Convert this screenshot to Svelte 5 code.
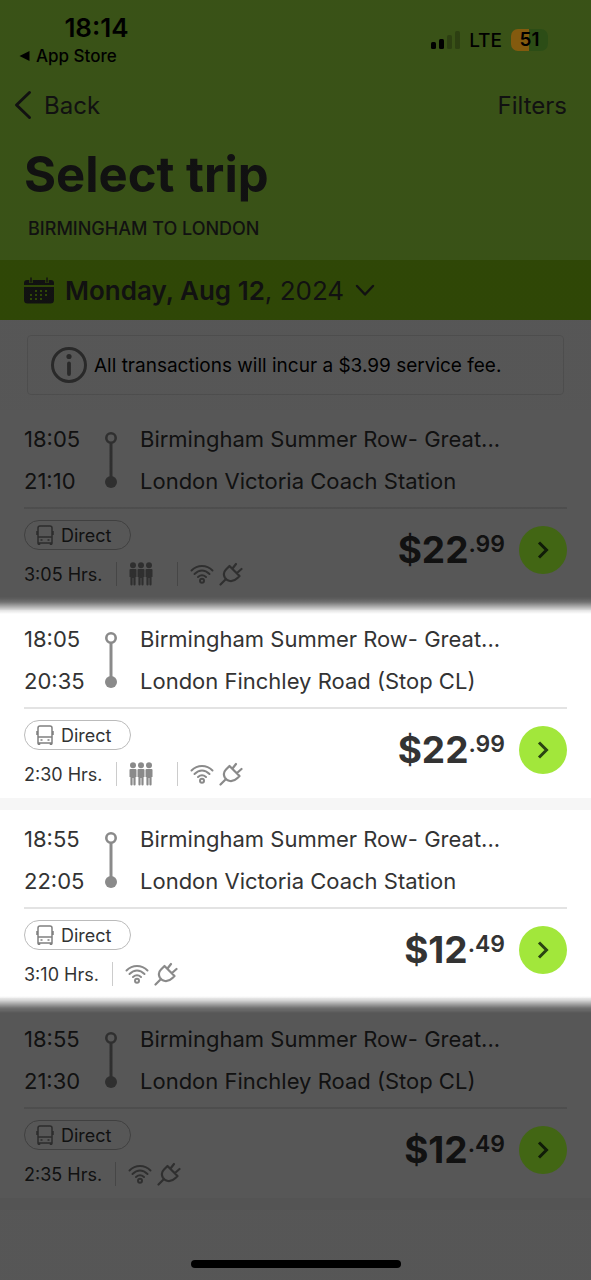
<script>
  const trips = [
    { depart: '18:05', arrive: '21:10', to: 'London Victoria Coach Station', hours: '3:05', busy: true, whole: '22', cents: '99' },
    { depart: '18:05', arrive: '20:35', to: 'London Finchley Road (Stop CL)', hours: '2:30', busy: true, whole: '22', cents: '99' },
    { depart: '18:55', arrive: '22:05', to: 'London Victoria Coach Station', hours: '3:10', busy: false, whole: '12', cents: '49' },
    { depart: '18:55', arrive: '21:30', to: 'London Finchley Road (Stop CL)', hours: '2:35', busy: false, whole: '12', cents: '49' }
  ];
  const groups = [
    { lit: false, items: trips.slice(0, 1) },
    { lit: true, items: trips.slice(1, 3) },
    { lit: false, items: trips.slice(3) }
  ];
</script>

<div class="page">
  <header>
    <div class="status">
      <div class="clock">
        <strong>18:14</strong>
        <span class="source">
          <svg width="11" height="10" viewBox="0 0 11 10"><path d="M0.5 5 10.5 0v10z" /></svg>
          App Store
        </span>
      </div>
      <div class="signals">
        <svg width="30" height="20" viewBox="0 0 30 20">
          <rect x="0" y="12" width="5" height="7" rx="1.5" />
          <rect x="8" y="9" width="5" height="10" rx="1.5" />
          <rect x="16" y="5" width="5" height="14" rx="1.5" opacity=".22" />
          <rect x="24" y="1" width="5" height="18" rx="1.5" opacity=".22" />
        </svg>
        <span class="lte">LTE</span>
        <span class="battery"><b>51</b></span>
      </div>
    </div>
    <nav>
      <button class="plain">
        <svg width="18" height="30" viewBox="0 0 18 30"><path d="M15.500 2.500 2.500 15l13 12.500" fill="none" stroke="currentColor" stroke-width="3" stroke-linecap="round" stroke-linejoin="round" /></svg>
        Back
      </button>
      <button class="plain">Filters</button>
    </nav>
    <h1>Select trip</h1>
    <p class="route">BIRMINGHAM TO LONDON</p>
  </header>

  <button class="date">
    <svg width="30" height="27" viewBox="0 0 30 27" fill="currentColor">
      <path d="M3 3h24a3 3 0 0 1 3 3v2H0V6a3 3 0 0 1 3-3z" />
      <path d="M0 10h30v13a3.500 3.500 0 0 1-3.500 3.500h-23A3.500 3.500 0 0 1 0 23z" />
      <path d="M7 1v5M23 1v5" stroke="#8ad012" stroke-width="3.500" />
      <path d="M7 1v4M23 1v4" stroke="currentColor" stroke-width="1.500" stroke-linecap="round" />
      <path d="M11 14h2m3 0h2m3 0h2M6 18h2m3 0h2m3 0h2m3 0h2M6 22h2m3 0h2m3 0h2" stroke="#8ad012" stroke-width="2" />
    </svg>
    <span class="day"><b>Monday, Aug 12</b>, 2024</span>
    <svg width="20" height="13" viewBox="0 0 20 13"><path d="m2 2 8 8.500L18 2" fill="none" stroke="currentColor" stroke-width="2.500" stroke-linecap="round" stroke-linejoin="round" /></svg>
  </button>

  <main>
    <div class="notice">
      <svg width="36" height="36" viewBox="0 0 36 36">
        <circle cx="18" cy="18" r="16.500" fill="none" stroke="currentColor" stroke-width="3" />
        <circle cx="18" cy="9.500" r="2.600" fill="currentColor" />
        <path d="M18 16.500v10.500" stroke="currentColor" stroke-width="3.800" stroke-linecap="round" />
      </svg>
      <span>All transactions will incur a $3.99 service fee.</span>
    </div>

    {#each groups as group}
      <div class="group" class:dim={!group.lit}>
        {#each group.items as trip}
          <article>
            <div class="stops">
              <div class="times"><span>{trip.depart}</span><span>{trip.arrive}</span></div>
              <svg width="14" height="58" viewBox="0 0 14 58">
                <path d="M7 10v40" stroke="#8a8a8a" stroke-width="3" />
                <circle cx="7" cy="7" r="4.700" fill="#fff" stroke="#8a8a8a" stroke-width="2.600" />
                <circle cx="7" cy="51" r="6" fill="#8a8a8a" />
              </svg>
              <div class="places"><span>Birmingham Summer Row- Great...</span><span>{trip.to}</span></div>
            </div>
            <div class="offer">
              <div class="facts">
                <span class="direct">
                  <svg width="18" height="20" viewBox="0 0 18 20" fill="none" stroke="#808080" stroke-width="1.500">
                    <path d="M2 18V3q0-2 2-2h10q2 0 2 2v15zM2 12h14M1 6v4M17 6v4" />
                    <path d="M3 18v2M15 18v2" stroke-width="2.500" />
                    <path d="M4.500 15h2M11.500 15h2" />
                  </svg>
                  Direct
                </span>
                <div class="perks">
                  <span class="hours">{trip.hours} Hrs.</span>
                  {#if trip.busy}
                    <span class="cell people">
                      <svg width="24" height="24" viewBox="0 0 24 24" fill="#8a8a8a">
                        {#each [0, 8, 16] as x}
                          <g transform="translate({x} 0)">
                            <circle cx="4" cy="3.200" r="3" />
                            <path d="M1.500 7h5q1 0 1 1v7H6.600v7.500q0 1-1.100 1t-1.100-1V16h-.8v6.500q0 1-1.100 1t-1.100-1V15H.5V8q0-1 1-1z" />
                          </g>
                        {/each}
                      </svg>
                    </span>
                  {/if}
                  <span class="cell">
                    <svg width="24" height="20" viewBox="0 0 24 20" fill="none" stroke="#8a8a8a" stroke-width="2" stroke-linecap="round">
                      <path d="M1.500 6.500Q6 2 12 2t10.500 4.500M4.500 10Q8 6.500 12 6.500t7.500 3.500M8 13q4-3.500 8 0" />
                      <circle cx="12" cy="16.800" r="2" />
                    </svg>
                    <svg width="24" height="24" viewBox="0 0 24 24" fill="none" stroke="#8a8a8a" stroke-width="2.200" stroke-linecap="round" stroke-linejoin="round">
                      <path d="m10.500 4 10 10-2 2Q15 19.500 11 19 7.500 18.500 5.800 15.500 3.500 11 7 7.500zM13.500 6.500 17 2M18 11l4.500-4M6.500 17.500l-5 5" />
                    </svg>
                  </span>
                </div>
              </div>
              <div class="price"><span>${trip.whole}</span><sup>.{trip.cents}</sup></div>
              <button class="go" aria-label="Choose trip">
                <svg width="12" height="18" viewBox="0 0 12 18"><path d="m2 1.500 7.500 7.500L2 16.500" fill="none" stroke="currentColor" stroke-width="3" /></svg>
              </button>
            </div>
          </article>
        {/each}
        {#if group.lit}<div class="spotlight"></div>{/if}
      </div>
    {/each}
  </main>
  <div class="home"></div>
</div>

<style>
  :global(body) { margin: 0; }
  .page {
    position: relative;
    display: flex;
    flex-direction: column;
    min-height: 100vh;
    overflow: hidden;
    background: #fdfdfd;
    color: #333;
    font-family: Inter, "Liberation Sans", sans-serif;
    box-sizing: border-box;
  }
  svg { display: block; flex: none; }
  button { border: 0; padding: 0; background: none; color: inherit; font: inherit; cursor: pointer; }
  header { height: 260px; background: #a8ef43; }
  .status { display: flex; justify-content: space-between; padding: 12px 43px 0 19px; color: #000; }
  .clock { display: flex; flex-direction: column; width: 155px; }
  .clock strong { text-align: center; font-size: 26px; line-height: 32px; font-weight: 600; }
  .source { display: flex; align-items: center; gap: 6px; font-size: 17px; line-height: 24px; font-weight: 500; }
  .signals { display: flex; align-items: center; height: 56px; }
  .lte { margin-left: 8px; font-size: 19px; font-weight: 500; }
  .battery {
    position: relative;
    z-index: 2;
    width: 37px;
    height: 22px;
    margin-left: 9px;
    border-radius: 7px;
    background: linear-gradient(90deg, #835a0e 50%, #2c4d16 50%);
    text-align: center;
    font-size: 19px;
    line-height: 22px;
  }
  .battery b { font-weight: 600; }
  nav { display: flex; justify-content: space-between; align-items: center; height: 36px; margin-top: 19px; padding: 0 24px 0 14px; font-size: 24px; }
  .plain { display: flex; align-items: center; gap: 12px; }
  h1 { margin: 22px 24px 0; font-size: 49px; line-height: 60px; font-weight: 700; }
  .route { margin: 12px 28px 0; font-size: 18px; line-height: 24px; font-weight: 500; }
  .date { display: flex; align-items: center; gap: 11px; height: 60px; padding: 0 24px; background: #8ad012; font-size: 26px; }
  .date b { font-weight: 600; }
  main { display: flex; flex-direction: column; }
  .notice {
    display: flex;
    align-items: center;
    gap: 7px;
    height: 58px;
    margin: 15px 27px 15px;
    padding: 0 23px;
    border: 1px solid #e2e2e2;
    border-radius: 4px;
    color: #000;
    font-size: 19px;
    white-space: nowrap;
  }
  .notice svg { color: #777; }
  .group { position: relative; }
  /* Everything above and below the spotlight fades into the scrim. */
  .spotlight { position: absolute; inset: 4px 0 14px; pointer-events: none; z-index: 1; }
  .spotlight::before, .spotlight::after { content: ""; position: absolute; left: 0; right: 0; height: 2000px; }
  .spotlight::before {
    bottom: 100%;
    background: linear-gradient(to top, transparent, rgba(0, 0, 0, 0.12) 4px, rgba(0, 0, 0, 0.54) 12px, rgba(0, 0, 0, 0.66) 17px);
  }
  .spotlight::after {
    top: 100%;
    background: linear-gradient(to bottom, transparent, rgba(0, 0, 0, 0.12) 4px, rgba(0, 0, 0, 0.54) 12px, rgba(0, 0, 0, 0.66) 17px);
  }
  article { height: 188px; padding: 0 24px; border-bottom: 12px solid #f6f6f6; background: #fff; }
  .stops { display: flex; align-items: center; gap: 22px; height: 94px; padding-top: 3px; border-bottom: 2px solid #e3e3e3; font-size: 22px; line-height: 42px; white-space: nowrap; }
  .times, .places { display: flex; flex-direction: column; }
  .times { width: 58px; }
  .offer { display: flex; align-items: center; height: 82px; }
  .facts { flex: 1; display: flex; flex-direction: column; align-items: flex-start; gap: 12px; padding-top: 6px; }
  .direct { display: flex; align-items: center; gap: 7px; height: 28px; padding: 0 18px 0 11px; border: 1px solid #bbb; border-radius: 15px; font-size: 18px; }
  .perks { display: flex; align-items: center; height: 24px; font-size: 18px; white-space: nowrap; }
  .cell { display: flex; align-items: center; gap: 5px; height: 24px; margin-left: 13px; padding-left: 12px; border-left: 1px solid #ccc; }
  .people { padding-right: 11px; }
  .price { display: flex; align-items: flex-start; font-size: 37px; line-height: 46px; font-weight: 700; }
  .price sup { font-size: 23px; line-height: 34px; font-weight: 600; vertical-align: top; }
  .go { display: flex; align-items: center; justify-content: center; width: 48px; height: 48px; margin-left: 14px; border-radius: 50%; background: #a2e73b; color: #2a4412; }
  .dim .go { position: relative; z-index: 2; background: #426614; color: #101c08; }
  .home { position: relative; z-index: 2; width: 210px; height: 8px; margin: auto auto 12px; border-radius: 4px; background: #000; }
</style>
